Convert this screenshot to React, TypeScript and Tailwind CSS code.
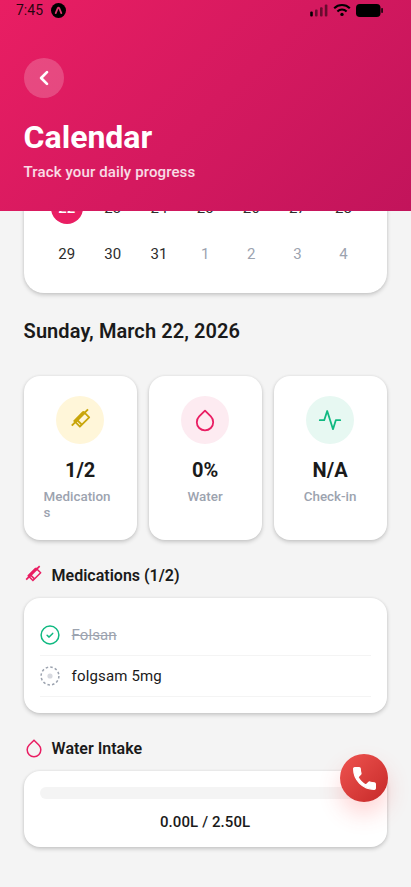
import type { ReactNode } from "react";

const WEEKS = [
  [22, 23, 24, 25, 26, 27, 28],
  [29, 30, 31, 1, 2, 3, 4],
];

const CARD =
  "bg-white shadow-[0_2px_4px_rgba(0,0,0,0.18),0_0_3px_rgba(0,0,0,0.07)]";

function PillIcon({ className }: { className?: string }) {
  return (
    <svg viewBox="0 0 24 24" fill="none" stroke="currentColor" className={className}>
      <path d="M3.8 17.6 8 13.4M15.5 5.9 20 1.4" strokeWidth="2" />
      <path d="M6.6 14 15.9 4.6" strokeWidth="3.6" />
      <path d="M6.4 13.2 15.7 3.9 21.2 9.4 11.9 18.7Z" strokeWidth="1.8" strokeLinejoin="round" />
      <path d="M9.1 12 13.8 16.6" strokeWidth="2" />
    </svg>
  );
}

function DropIcon({ className }: { className?: string }) {
  return (
    <svg
      viewBox="0 0 24 24"
      fill="none"
      stroke="currentColor"
      strokeWidth="1.8"
      strokeLinejoin="round"
      className={className}
    >
      <path d="m12 2.6 5.8 5.8a8.2 8.2 0 1 1-11.6 0Z" />
    </svg>
  );
}

function PulseIcon({ className }: { className?: string }) {
  return (
    <svg
      viewBox="0 0 24 24"
      fill="none"
      stroke="currentColor"
      strokeWidth="1.8"
      strokeLinecap="round"
      strokeLinejoin="round"
      className={className}
    >
      <path d="M1.8 12.2h4.4L9.2 3 15 21.2l2.8-9h4.4" />
    </svg>
  );
}

function StatusBar() {
  return (
    <div className="flex h-5 items-center justify-between pr-[28.5px] pl-4">
      <div className="flex items-center gap-2 text-black/85">
        <span className="text-[14px] leading-5">7:45</span>
        <svg viewBox="0 0 16 16" className="size-[15px]">
          <circle cx="8" cy="8" r="8" fill="#000" />
          <path
            d="M5 10.8 7.2 5.6q.8-1.3 1.6 0l2.2 5.2"
            fill="none"
            stroke="#e0356f"
            strokeWidth="1.9"
            strokeLinecap="round"
          />
        </svg>
      </div>
      <div className="flex items-center gap-[5px]">
        <svg viewBox="0 0 18 14" className="h-[14px] w-[18px]">
          <rect x="0.2" y="8.5" width="2.6" height="5" rx="1" />
          <g opacity="0.5">
            <rect x="5" y="6.5" width="2.6" height="7" rx="1" />
            <rect x="10" y="4.2" width="2.6" height="9.3" rx="1" />
            <rect x="14.8" y="1.5" width="2.6" height="12" rx="1" />
          </g>
        </svg>
        <svg
          viewBox="0 0 18 14"
          fill="none"
          stroke="#000"
          strokeWidth="2.1"
          className="h-[14px] w-[18px]"
        >
          <path d="M1.2 5.2a11.2 11.2 0 0 1 15.6 0M4.4 8.4a6.6 6.6 0 0 1 9.2 0" />
          <circle cx="9" cy="11.4" r="1.7" fill="#000" stroke="none" />
        </svg>
        <svg viewBox="0 0 27 13" className="h-[13px] w-[27px]">
          <rect width="24.5" height="13" rx="3.8" />
          <rect x="25.3" y="4" width="1.5" height="5" rx="0.7" />
        </svg>
      </div>
    </div>
  );
}

function Header() {
  return (
    <header className="relative z-10 h-[210.5px] bg-linear-135 from-[#e91e63] to-[#c2145b]">
      <StatusBar />
      <div className="px-[23.6px] pt-[38px]">
        <button
          type="button"
          aria-label="Back"
          className="grid size-10 place-items-center rounded-full bg-white/20 text-white"
        >
          <svg
            viewBox="0 0 20 20"
            fill="none"
            stroke="currentColor"
            strokeWidth="2.7"
            strokeLinecap="round"
            strokeLinejoin="round"
            className="size-5"
          >
            <path d="M13 4.1 7.1 10l5.9 5.9" />
          </svg>
        </button>
        <h1 className="mt-[19px] text-[32px] leading-10 font-bold text-white">Calendar</h1>
        <p className="mt-[5px] text-[15px] leading-5 font-medium tracking-[0.12px] text-white/85">
          Track your daily progress
        </p>
      </div>
    </header>
  );
}

function Calendar() {
  return (
    <section className={`-mt-[25.5px] rounded-b-[20px] px-5 pb-4 ${CARD}`}>
      {WEEKS.map((week, row) => (
        <div key={row} className="grid h-[46px] grid-cols-7 place-items-center">
          {week.map((day) => {
            const selected = day === 22;
            const outside = row === 1 && day < 10;
            return (
              <span
                key={day}
                className={`grid size-8 place-items-center rounded-full text-[15px] leading-5 ${
                  selected
                    ? "bg-[#e91e63] font-medium text-white"
                    : outside
                      ? "text-[#9ca3af]"
                      : "text-[#2d2d2d]"
                }`}
              >
                {day}
              </span>
            );
          })}
        </div>
      ))}
    </section>
  );
}

function StatCard({
  icon,
  tint,
  value,
  label,
}: {
  icon: ReactNode;
  tint: string;
  value: string;
  label: string;
}) {
  return (
    <div className={`flex h-[164px] flex-col items-center rounded-2xl p-5 ${CARD}`}>
      <div className={`grid size-12 shrink-0 place-items-center rounded-full ${tint}`}>{icon}</div>
      <p className="mt-3 text-[20px] leading-7 font-bold text-[#1a1a1a]">{value}</p>
      <p className="mt-[5px] text-[13.4px] leading-4 font-medium break-all text-[#9ca3af]">
        {label}
      </p>
    </div>
  );
}

function SectionTitle({ icon, children }: { icon: ReactNode; children: ReactNode }) {
  return (
    <h3 className="flex h-6 items-center gap-2 text-[16px] font-semibold text-[#1a1a1a]">
      {icon}
      {children}
    </h3>
  );
}

function Medications() {
  return (
    <section className="mt-6">
      <SectionTitle icon={<PillIcon className="size-5 -translate-x-px -translate-y-px text-[#e91e63]" />}>
        Medications (1/2)
      </SectionTitle>
      <ul className={`mt-[10px] rounded-2xl p-4 ${CARD}`}>
        <li className="flex h-[42px] items-center gap-3 border-b border-[#f4f4f4]">
          <svg
            viewBox="0 0 20 20"
            fill="none"
            stroke="#10b981"
            strokeWidth="1.5"
            strokeLinecap="round"
            strokeLinejoin="round"
            className="size-5"
          >
            <circle cx="10" cy="10" r="8.9" />
            <path d="m7.1 10.2 2 1.9 3.6-3.7" />
          </svg>
          <span className="pt-px text-[15px] tracking-[0.1px] text-[#9ca3af] line-through">
            Folsan
          </span>
        </li>
        <li className="flex h-[41px] items-center gap-3 border-b border-[#f4f4f4]">
          <svg viewBox="0 0 20 20" fill="none" className="size-5">
            <circle
              cx="10"
              cy="10"
              r="8.9"
              stroke="#9ca3af"
              strokeWidth="1.5"
              strokeDasharray="2.5 2.16"
            />
            <circle cx="10" cy="10" r="2.6" fill="#d7d9df" />
          </svg>
          <span className="pt-px text-[15px] tracking-[0.15px] text-[#1a1a1a]">folgsam 5mg</span>
        </li>
      </ul>
    </section>
  );
}

function WaterIntake() {
  return (
    <section className="mt-6">
      <SectionTitle icon={<DropIcon className="size-5 -translate-y-px text-[#e91e63]" />}>
        Water Intake
      </SectionTitle>
      <div className={`mt-[10px] rounded-2xl p-4 ${CARD}`}>
        <div className="h-3 rounded-md bg-[#f4f4f4]" />
        <p className="mt-[13px] -mb-px text-center text-[15px] leading-5 font-medium tracking-[0.1px] text-[#1a1a1a]">
          0.00L / 2.50L
        </p>
      </div>
    </section>
  );
}

export default function App() {
  return (
    <div className="relative h-[887px] w-full overflow-hidden bg-[#f4f4f4] font-['Roboto',sans-serif]">
      <Header />
      <main className="pr-[24.4px] pl-[23.6px]">
        <Calendar />
        <h2 className="mt-[24px] text-[20px] leading-7 font-semibold tracking-[0.08px] text-[#1a1a1a]">
          Sunday, March 22, 2026
        </h2>
        <div className="mt-[31px] grid grid-cols-3 gap-3">
          <StatCard
            icon={<PillIcon className="size-6 text-[#c9a60c]" />}
            tint="bg-[#fff6d9]"
            value="1/2"
            label="Medications"
          />
          <StatCard
            icon={<DropIcon className="size-6 text-[#e91e63]" />}
            tint="bg-[#fdebf1]"
            value="0%"
            label="Water"
          />
          <StatCard
            icon={<PulseIcon className="size-6 text-[#10b981]" />}
            tint="bg-[#e7f8f2]"
            value="N/A"
            label="Check-in"
          />
        </div>
        <Medications />
        <WaterIntake />
      </main>
      <button
        type="button"
        aria-label="Call"
        className="absolute top-[754px] left-[340px] grid size-12 place-items-center rounded-full bg-linear-135 from-[#ef5350] to-[#c62828] shadow-[0_12px_22px_rgba(255,70,70,0.22)]"
      >
        <svg
          viewBox="0 0 24 24"
          fill="#fff"
          stroke="#fff"
          strokeWidth="1"
          strokeLinejoin="round"
          className="size-[29px]"
        >
          <path d="M6.62 10.79c1.44 2.83 3.76 5.14 6.59 6.59l2.2-2.2c.27-.27.67-.36 1.02-.24 1.12.37 2.33.57 3.57.57.55 0 1 .45 1 1V20c0 .55-.45 1-1 1-9.39 0-17-7.61-17-17 0-.55.45-1 1-1h3.5c.55 0 1 .45 1 1 0 1.25.2 2.45.57 3.57.11.35.03.74-.25 1.02z" />
        </svg>
      </button>
    </div>
  );
}
